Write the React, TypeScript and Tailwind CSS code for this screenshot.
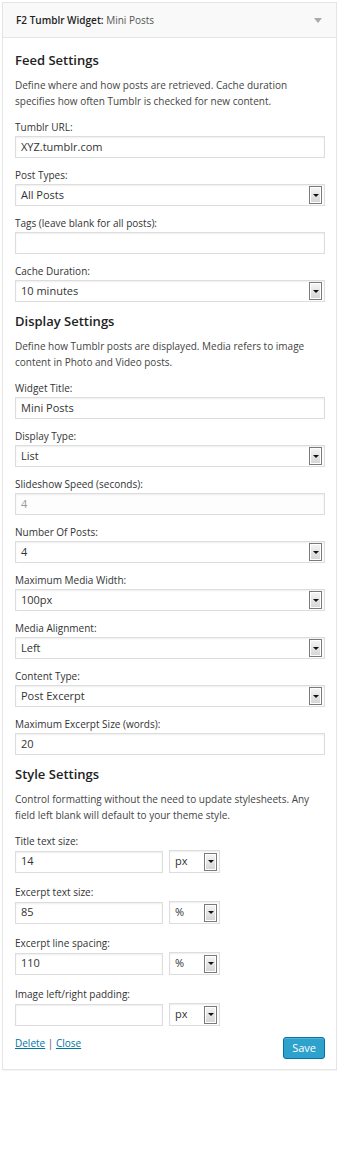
import React from "react";

const font = { fontFamily: '"Open Sans", "Liberation Sans", sans-serif' };

function Label({ children }: { children: React.ReactNode }) {
  return <div className="text-[10px] leading-[14px] mb-[2px] text-[#333]">{children}</div>;
}

function TextInput({ value, disabled, className = "" }: { value?: string; disabled?: boolean; className?: string }) {
  return (
    <div
      className={`h-[22px] border border-[#ddd] shadow-[inset_0_1px_2px_rgba(0,0,0,0.07)] flex items-center px-[5px] text-[11px] ${
        disabled ? "bg-[#fdfdfd] text-[#999]" : "bg-white text-[#333]"
      } ${className}`}
    >
      {value}
    </div>
  );
}

function SelectArrow() {
  return (
    <div className="w-[13px] h-[18px] border border-[#7a7a7a] bg-gradient-to-b from-[#f6f6f6] to-[#d4d4d4] shadow-[inset_0_0_0_1px_#fff] flex items-center justify-center shrink-0">
      <div className="w-0 h-0 border-l-[3px] border-r-[3px] border-t-[3px] border-l-transparent border-r-transparent border-t-[#111]" />
    </div>
  );
}

function Select({ value, className = "" }: { value: string; className?: string }) {
  return (
    <div className={`h-[22px] border border-[#ddd] bg-white shadow-[inset_0_1px_2px_rgba(0,0,0,0.07)] flex items-center justify-between pl-[5px] pr-[2px] text-[11px] text-[#333] ${className}`}>
      <span>{value}</span>
      <SelectArrow />
    </div>
  );
}

function Field({ label, children, tall }: { label: string; children: React.ReactNode; tall?: boolean }) {
  return (
    <div className={tall ? "mb-[12px]" : "mb-[10px]"}>
      <Label>{label}</Label>
      {children}
    </div>
  );
}

function UnitField({ label, value, unit }: { label: string; value: string; unit: string }) {
  return (
    <Field label={label} tall>
      <div className="flex items-center gap-[6px]">
        <TextInput value={value} className="w-[148px]" />
        <Select value={unit} className="w-[51px] h-[23px]" />
      </div>
    </Field>
  );
}

function Section({ title, desc, children }: { title: string; desc: string; children: React.ReactNode }) {
  return (
    <div>
      <h3 className="text-[13px] font-semibold text-[#222] leading-[18px] mb-[8px]">{title}</h3>
      <p className="text-[10px] leading-[16px] text-[#444] mb-[11px]">{desc}</p>
      {children}
    </div>
  );
}

export default function App() {
  return (
    <div className="min-h-screen bg-white p-[2px]" style={font}>
      <div className="w-[335px] border border-[#e5e5e5] bg-white shadow-[0_1px_1px_rgba(0,0,0,0.04)]">
        <div className="h-[35px] bg-[#f9f9f9] border-b border-[#e5e5e5] flex items-center justify-between pl-[13px] pr-[14px]">
          <div className="text-[10px] text-[#222]">
            <span className="font-semibold">F2 Tumblr Widget:</span> <span className="text-[#555]">Mini Posts</span>
          </div>
          <div className="w-0 h-0 border-l-[4px] border-r-[4px] border-t-[5px] border-l-transparent border-r-transparent border-t-[#aaa]" />
        </div>

        <div className="pl-[12px] pr-[11px] pt-[13px] pb-[10px]">
          <Section title="Feed Settings" desc="Define where and how posts are retrieved. Cache duration specifies how often Tumblr is checked for new content.">
            <Field label="Tumblr URL:"><TextInput value="XYZ.tumblr.com" /></Field>
            <Field label="Post Types:"><Select value="All Posts" /></Field>
            <Field label="Tags (leave blank for all posts):"><TextInput /></Field>
            <Field label="Cache Duration:"><Select value="10 minutes" /></Field>
          </Section>

          <Section title="Display Settings" desc="Define how Tumblr posts are displayed. Media refers to image content in Photo and Video posts.">
            <Field label="Widget Title:"><TextInput value="Mini Posts" /></Field>
            <Field label="Display Type:"><Select value="List" /></Field>
            <Field label="Slideshow Speed (seconds):"><TextInput value="4" disabled /></Field>
            <Field label="Number Of Posts:"><Select value="4" /></Field>
            <Field label="Maximum Media Width:"><Select value="100px" /></Field>
            <Field label="Media Alignment:"><Select value="Left" /></Field>
            <Field label="Content Type:"><Select value="Post Excerpt" /></Field>
            <Field label="Maximum Excerpt Size (words):"><TextInput value="20" /></Field>
          </Section>

          <Section title="Style Settings" desc="Control formatting without the need to update stylesheets. Any field left blank will default to your theme style.">
            <UnitField label="Title text size:" value="14" unit="px" />
            <UnitField label="Excerpt text size:" value="85" unit="%" />
            <UnitField label="Excerpt line spacing:" value="110" unit="%" />
            <UnitField label="Image left/right padding:" value="" unit="px" />
          </Section>

          {/* footer actions */}
          <div className="flex items-start justify-between -mt-[2px]">
            <div className="text-[10px] leading-[14px] text-[#0074a2]">
              <a className="underline">Delete</a> <span className="text-[#555]">|</span> <a className="underline">Close</a>
            </div>
            <button className="h-[22px] px-[8px] mt-[1px] rounded-[3px] bg-[#2ea2cc] border border-[#0074a2] text-white text-[11px] shadow-[inset_0_1px_0_rgba(120,200,230,0.5)]">
              Save
            </button>
          </div>
        </div>
      </div>
    </div>
  );
}
